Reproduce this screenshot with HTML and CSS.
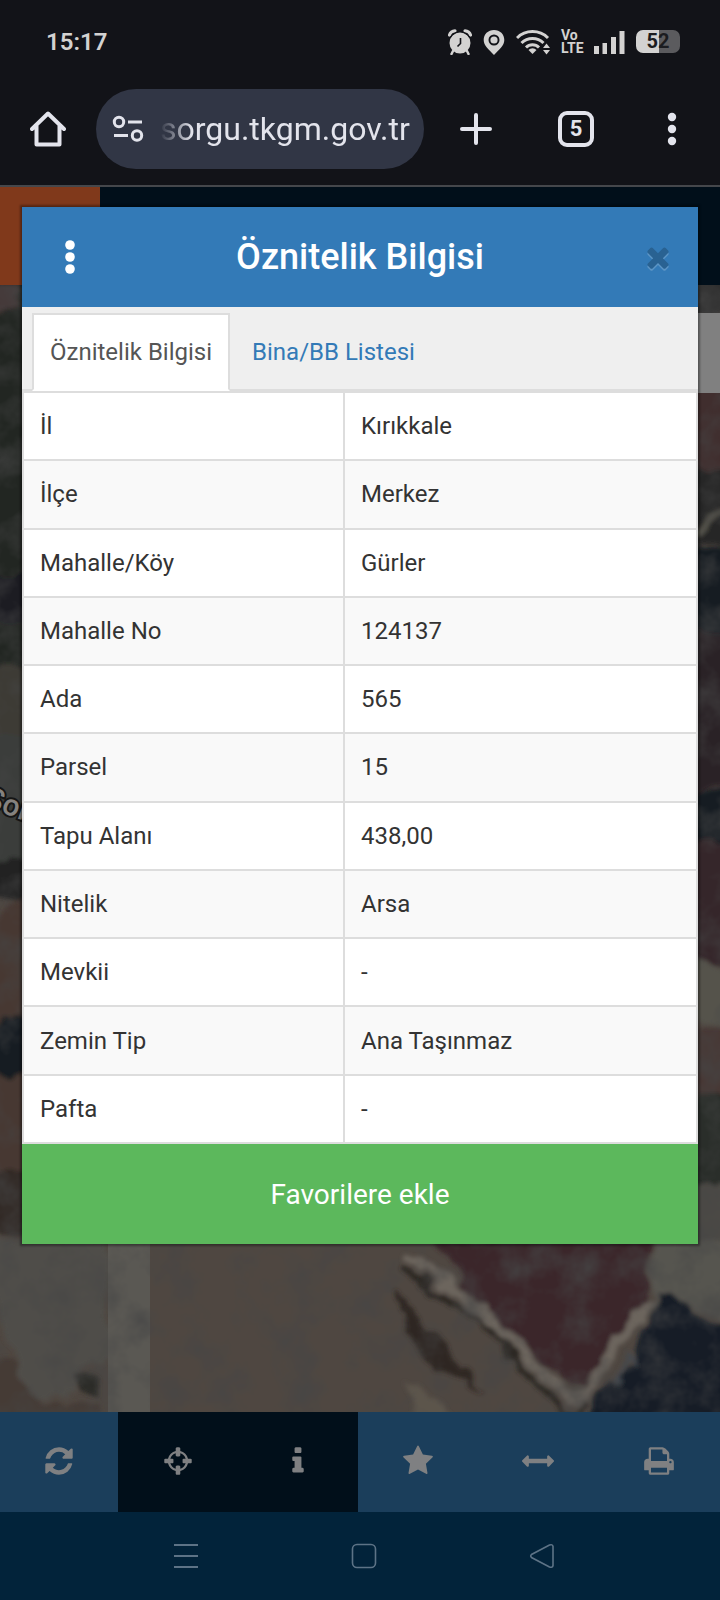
FILE: index.html
```html
<!DOCTYPE html>
<html lang="tr">
<head>
<meta charset="utf-8">
<meta name="viewport" content="width=device-width, initial-scale=1">
<title>Öznitelik Bilgisi</title>
<link rel="stylesheet" href="styles.css">
</head>
<body>
<div class="phone">
  <header class="status-bar">
    <time class="clock">15:17</time>
    <div class="status-icons">
      <svg width="24" height="26" viewBox="0 0 24 26" aria-label="Alarm">
        <circle cx="12" cy="14" r="10.500" fill="currentColor"/>
        <path d="M1.500 6A6 6 0 0 1 7 1.800M22.500 6A6 6 0 0 0 17 1.800" fill="none" stroke="currentColor" stroke-width="3.200" stroke-linecap="round"/>
        <path d="M5 22l-1.500 3M19 22l1.500 3" stroke="currentColor" stroke-width="2.500" stroke-linecap="round"/>
        <path d="M12.500 9v5.500l-3 3" fill="none" stroke="#121318" stroke-width="1.600"/>
        <path d="M2 8.500A13 13 0 0 1 8.500 3.200M22 8.500A13 13 0 0 0 15.500 3.200" fill="none" stroke="#121318" stroke-width="1.200"/>
      </svg>
      <svg width="22" height="26" viewBox="0 0 22 26" aria-label="Konum">
        <path fill-rule="evenodd" d="M11 1C5 1 .7 5.300 .7 11c0 6 5 9 10.300 15 5.300-6 10.300-9 10.300-15C21.300 5.300 17 1 11 1zm0 4.500a5.500 5.500 0 1 1 0 11 5.500 5.500 0 0 1 0-11z" fill="currentColor"/>
        <circle cx="11" cy="11" r="3.600" fill="currentColor"/>
      </svg>
      <svg width="34" height="26" viewBox="0 0 34 26" aria-label="Wi-Fi">
        <g fill="none" stroke="currentColor" stroke-width="3">
          <path d="M1 9a22 22 0 0 1 31 0M5.500 14a15.600 15.600 0 0 1 22 0M10 18.500a9.200 9.200 0 0 1 13 0"/>
        </g>
        <path d="M16.500 25l-4-4a5.600 5.600 0 0 1 8 0z" fill="currentColor"/>
        <path d="M27 19l3.500-4.500L34 19zM27 21l3.500 4.500L34 21z" fill="currentColor"/>
      </svg>
      <span class="volte"><span>Vo</span><span>LTE</span></span>
      <svg width="31" height="26" viewBox="0 0 31 26" aria-label="Sinyal">
        <path d="M0 17h5v8H0zM8.500 14h4.500v11H8.500zM17 8h5v17h-5zM25.500 2h5v23h-5z" fill="currentColor"/>
      </svg>
      <span class="battery">52</span>
    </div>
  </header>

  <nav class="browser-bar">
    <button class="bar-button" aria-label="Ana sayfa">
      <svg width="36" height="38" viewBox="0 0 36 38" fill="none" stroke="currentColor" stroke-width="4" stroke-linejoin="round" stroke-linecap="round"><path d="M2 19L18 3.500 34 19M6.500 16v18.500h23V16"/></svg>
    </button>
    <div class="address">
      <svg width="32" height="28" viewBox="0 0 32 28" fill="none" stroke="currentColor" stroke-width="3"><circle cx="7" cy="7" r="4.700"/><path d="M16 7h14M2 20.500h14"/><circle cx="25" cy="20.500" r="4.700"/></svg>
      <span class="url">sorgu.tkgm.gov.tr</span>
    </div>
    <button class="bar-button plus" aria-label="Yeni sekme">
      <svg width="32" height="32" viewBox="0 0 32 32" stroke="currentColor" stroke-width="4" stroke-linecap="round"><path d="M16 2v28M2 16h28"/></svg>
    </button>
    <button class="bar-button" aria-label="Sekmeler"><span class="tab-count">5</span></button>
    <button class="bar-button" aria-label="Menü">
      <svg width="10" height="34" viewBox="0 0 10 34" fill="currentColor"><circle cx="5" cy="5" r="4.200"/><circle cx="5" cy="17" r="4.200"/><circle cx="5" cy="29" r="4.200"/></svg>
    </button>
  </nav>

  <main class="page">
    <div class="site-bar"><div class="site-logo"></div></div>
    <div class="map">
      <svg class="map-scene" viewBox="0 0 720 1127" preserveAspectRatio="none" aria-hidden="true">
        <defs>
          <filter id="soft" x="-5%" y="-5%" width="110%" height="110%">
            <feTurbulence type="fractalNoise" baseFrequency="0.03" numOctaves="3" seed="4" result="noise"/>
            <feDisplacementMap in="SourceGraphic" in2="noise" scale="26" xChannelSelector="R" yChannelSelector="G"/>
            <feGaussianBlur stdDeviation="2"/>
          </filter>
          <filter id="grain" x="0" y="0" width="100%" height="100%">
            <feTurbulence type="fractalNoise" baseFrequency="0.025" numOctaves="4" seed="8"/>
            <feColorMatrix values="0 0 0 0 0.06  0 0 0 0 0.06  0 0 0 0 0.06  1.600 0 0 0 -0.680"/>
          </filter>
        </defs>
        <rect width="720" height="1127" fill="#4f4741"/>
        <g filter="url(#soft)">
          <path d="M-30-30h70v410h-70z" fill="#232524"/>
          <path d="M-30 0h50v20l-50 18z" fill="#443737"/>
          <path d="M-30 290h60v50h-60z" fill="#1b1e22"/>
          <path d="M-30 380h70v70h-70z" fill="#3d3a35"/>
          <path d="M-30 450h70v135h-70z" fill="#3a3e3b"/>
          <path d="M-30 575h70v35h-70z" fill="#202322"/>
          <path d="M-30 655l70-60v140h-70z" fill="#463731"/>
          <path d="M-30 735h70v55h-70z" fill="#171c24"/>
          <path d="M-30 790h70v100h-70z" fill="#463831"/>
          <path d="M-30 890h70v60h-70z" fill="#302a27"/>
          <path d="M680-30h70v58h-70z" fill="#2a2c2a"/>
          <path d="M680 90h70v93h-70z" fill="#402d2d"/>
          <path d="M680 183h70v77h-70z" fill="#252725"/>
          <path d="M695 248q12-20 40-15" fill="none" stroke="#55534c" stroke-width="8"/>
          <path d="M680 262h70v85h-70z" fill="#181d23"/>
          <path d="M680 347h70v160h-70z" fill="#2b2328"/>
          <path d="M680 502l70 15v45h-70z" fill="#171b22"/>
          <path d="M680 560h70v120h-70z" fill="#35272a"/>
          <path d="M680 670l70 25v55l-70-18z" fill="#55534c"/>
          <path d="M680 745h70v65h-70z" fill="#463735"/>
          <path d="M680 810h70v90h-70z" fill="#2b2d2a"/>
          <path d="M680 900h70v60h-70z" fill="#4b4944"/>
          <g transform="translate(0 935) scale(.459)">
            <path d="M-60 40L240 40v280h-70l-30 70-60 10-60-130z" fill="#504d48"/>
            <path d="M-60 290l100 30 50 90 130-10v250H-60z" fill="#453b36"/>
            <path d="M150 335l70 5-10 45-50-15z" fill="#2c2926"/>
            <path d="M380 500l68-10 15 160h-95z" fill="#272626"/>
            <path d="M850 140l180 210 20 20-90-40-70-90z" fill="#2d2524"/>
            <path d="M940 40h500l-40 150-130 190-230-190z" fill="#3a282c"/>
            <path d="M880 340l110 80 60 230h-90z" fill="#5c554c"/>
            <path d="M1440 40h200v220l-140-70-90 10z" fill="#57544f"/>
            <path d="M885 85l140 90 180 180 50 50 60-90 90-130" fill="none" stroke="#6c655d" stroke-width="24"/>
            <path d="M870 110l180 110 190 215 30-30" fill="none" stroke="#2b2724" stroke-width="12"/>
            <path d="M1425 172l60 10 65 50 100-20v450h-350l-35-180 35-100 80-70z" fill="#171e27"/>
            <path d="M1350 350l20-55 20 20" fill="none" stroke="#454a50" stroke-width="8"/>
          </g>
        </g>
        <path d="M108 950h42v177h-42z" fill="#5a5853"/>
        <rect width="720" height="1127" filter="url(#grain)"/>
        <text class="map-label" x="-18" y="527" transform="rotate(20 0 527)">Sor</text>
        <path d="M640 28h80v80h-80z" fill="#808080"/>
      </svg>
    </div>
    <div class="tools">
      <button class="tool" aria-label="Yenile"><svg class="fa" viewBox="0 0 1792 1792"><path d="M1639 1056q0 5-1 7-64 268-268 434.500t-478 166.500q-146 0-282.500-55t-243.500-157l-129 129q-19 19-45 19t-45-19-19-45v-448q0-26 19-45t45-19h448q26 0 45 19t19 45-19 45l-137 137q71 66 161 102t187 36q134 0 250-65t186-179q11-17 53-117 8-23 30-23h192q13 0 22.500 9.500t9.500 22.500zm25-800v448q0 26-19 45t-45 19h-448q-26 0-45-19t-19-45 19-45l138-138q-148-137-349-137-134 0-250 65t-186 179q-11 17-53 117-8 23-30 23h-199q-13 0-22.500-9.500t-9.500-22.500v-7q65-268 270-434.500t480-166.500q146 0 284 55.500t245 156.500l130-129q19-19 45-19t45 19 19 45z"/></svg></button>
      <button class="tool active" aria-label="Konumum"><svg class="fa" viewBox="0 0 1792 1792"><path d="M1325 1024h-109q-26 0-45-19t-19-45v-128q0-26 19-45t45-19h109q-32-108-112.500-188.500t-188.500-112.500v109q0 26-19 45t-45 19h-128q-26 0-45-19t-19-45v-109q-108 32-188.500 112.500t-112.500 188.500h109q26 0 45 19t19 45v128q0 26-19 45t-45 19h-109q32 108 112.500 188.500t188.500 112.500v-109q0-26 19-45t45-19h128q26 0 45 19t19 45v109q108-32 188.500-112.500t112.500-188.500zm339-192v128q0 26-19 45t-45 19h-143q-37 161-154.500 278.500t-278.500 154.500v143q0 26-19 45t-45 19h-128q-26 0-45-19t-19-45v-143q-161-37-278.500-154.500t-154.500-278.500h-143q-26 0-45-19t-19-45v-128q0-26 19-45t45-19h143q37-161 154.500-278.500t278.500-154.500v-143q0-26 19-45t45-19h128q26 0 45 19t19 45v143q161 37 278.500 154.500t154.500 278.500h143q26 0 45 19t19 45z"/></svg></button>
      <button class="tool active" aria-label="Bilgi"><svg class="fa" viewBox="0 0 1792 1792"><path d="M1216 1344v128q0 26-19 45t-45 19h-512q-26 0-45-19t-19-45v-128q0-26 19-45t45-19h64v-384h-64q-26 0-45-19t-19-45v-128q0-26 19-45t45-19h384q26 0 45 19t19 45v576h64q26 0 45 19t19 45zm-128-1152v192q0 26-19 45t-45 19h-256q-26 0-45-19t-19-45v-192q0-26 19-45t45-19h256q26 0 45 19t19 45z"/></svg></button>
      <button class="tool" aria-label="Favoriler"><svg class="fa" viewBox="0 0 1792 1792"><path d="M1728 647q0 22-26 48l-363 354 86 500q1 7 1 20 0 21-10.500 35.500t-30.500 14.500q-19 0-40-12l-449-236-449 236q-22 12-40 12-21 0-31.500-14.500t-10.500-35.500q0-6 2-20l86-500-364-354q-25-27-25-48 0-37 56-46l502-73 225-455q19-41 49-41t49 41l225 455 502 73q56 9 56 46z"/></svg></button>
      <button class="tool" aria-label="Ölçüm"><svg class="fa" viewBox="0 0 1792 1792"><path d="M1792 896q0 26-19 45l-256 256q-19 19-45 19t-45-19-19-45v-128h-1024v128q0 26-19 45t-45 19-45-19l-256-256q-19-19-19-45t19-45l256-256q19-19 45-19t45 19 19 45v128h1024v-128q0-26 19-45t45-19 45 19l256 256q19 19 19 45z"/></svg></button>
      <button class="tool" aria-label="Yazdır"><svg class="fa" viewBox="0 0 1792 1792"><path d="M448 1536h896v-256h-896v256zm0-640h896v-384h-160q-40 0-68-28t-28-68v-160h-640v640zm1152 64q0-26-19-45t-45-19-45 19-19 45 19 45 45 19 45-19 19-45zm128 0v416q0 13-9.500 22.500t-22.500 9.500h-224v160q0 40-28 68t-68 28h-960q-40 0-68-28t-28-68v-160h-224q-13 0-22.500-9.500t-9.500-22.500v-416q0-79 56.500-135.500t135.500-56.500h64v-544q0-40 28-68t68-28h672q40 0 88 20t76 48l152 152q28 28 48 76t20 88v256h64q79 0 135.500 56.500t56.500 135.500z"/></svg></button>
    </div>

    <section class="modal" role="dialog" aria-labelledby="modal-title">
      <header class="modal-header">
        <button class="modal-button" aria-label="Seçenekler"><svg width="10" height="36" viewBox="0 0 10 36" fill="#fff"><circle cx="5" cy="6" r="4.800"/><circle cx="5" cy="18" r="4.800"/><circle cx="5" cy="30" r="4.800"/></svg></button>
        <h1 class="modal-title" id="modal-title">Öznitelik Bilgisi</h1>
        <button class="modal-button close" aria-label="Kapat"><svg class="fa" viewBox="0 0 1792 1792"><path d="M1490 1322q0 40-28 68l-136 136q-28 28-68 28t-68-28l-294-294-294 294q-28 28-68 28t-68-28l-136-136q-28-28-28-68t28-68l294-294-294-294q-28-28-28-68t28-68l136-136q28-28 68-28t68 28l294 294 294-294q28-28 68-28t68 28l136 136q28 28 28 68t-28 68l-294 294 294 294q28 28 28 68z"/></svg></button>
      </header>
      <nav class="tabs">
        <a class="tab selected" href="#oznitelik">Öznitelik Bilgisi</a>
        <a class="tab" href="#bina">Bina/BB Listesi</a>
      </nav>
      <table class="attributes" id="oznitelik">
        <tbody>
          <tr><th scope="row">İl</th><td>Kırıkkale</td></tr>
          <tr><th scope="row">İlçe</th><td>Merkez</td></tr>
          <tr><th scope="row">Mahalle/Köy</th><td>Gürler</td></tr>
          <tr><th scope="row">Mahalle No</th><td>124137</td></tr>
          <tr><th scope="row">Ada</th><td>565</td></tr>
          <tr><th scope="row">Parsel</th><td>15</td></tr>
          <tr><th scope="row">Tapu Alanı</th><td>438,00</td></tr>
          <tr><th scope="row">Nitelik</th><td>Arsa</td></tr>
          <tr><th scope="row">Mevkii</th><td>-</td></tr>
          <tr><th scope="row">Zemin Tip</th><td>Ana Taşınmaz</td></tr>
          <tr><th scope="row">Pafta</th><td>-</td></tr>
        </tbody>
      </table>
      <button class="favorite">Favorilere ekle</button>
    </section>
  </main>

  <nav class="system-nav">
    <button class="system-button" aria-label="Son uygulamalar"><svg width="26" height="26" viewBox="0 0 26 26" stroke="currentColor" stroke-width="2"><path d="M1 2h24M1 13h24M1 24h24"/></svg></button>
    <button class="system-button" aria-label="Ana ekran"><svg width="26" height="26" viewBox="0 0 26 26" fill="none" stroke="currentColor" stroke-width="1.600"><rect x="1.500" y="1.500" width="23" height="23" rx="4.500"/></svg></button>
    <button class="system-button" aria-label="Geri"><svg width="26" height="26" viewBox="0 0 26 26" fill="none" stroke="currentColor" stroke-width="1.600"><path d="M2.500 11.500q-1.500 1.500 0 3l18 9.500q3 1 3.500-1.500v-19q-.5-2.500-3.500-1.500z"/></svg></button>
  </nav>
</div>
</body>
</html>
```

FILE: styles.css
```css
* {
  box-sizing: border-box;
}

body {
  margin: 0;
  background: #121318;
  font-family: Roboto, "Liberation Sans", sans-serif;
}

button {
  display: flex;
  align-items: center;
  justify-content: center;
  margin: 0;
  padding: 0;
  border: 0;
  background: none;
  color: inherit;
  font: inherit;
}

svg {
  display: block;
  flex: none;
}

.phone {
  display: flex;
  flex-direction: column;
  min-height: 100vh;
}

.status-bar {
  display: flex;
  align-items: center;
  justify-content: space-between;
  height: 83px;
  padding: 0 40px 0 46px;
  color: #d3d2d1;
}

.clock {
  font-size: 24px;
  font-weight: 600;
}

.status-icons {
  display: flex;
  align-items: center;
  gap: 11px;
}

.volte {
  display: flex;
  flex-direction: column;
  width: 22px;
  font-size: 14px;
  font-weight: 700;
  line-height: 13px;
}

.battery {
  width: 44px;
  height: 23px;
  border-radius: 7px;
  background: linear-gradient(to right, #d3d2d1 52%, #5b5b5e 52%);
  color: #1b1c20;
  font-size: 20px;
  font-weight: 700;
  line-height: 23px;
  text-align: center;
}

.browser-bar {
  display: flex;
  align-items: center;
  padding: 6px 0 16px;
  border-bottom: 2px solid #45474b;
  color: #e3e4ec;
}

.bar-button {
  width: 96px;
  height: 80px;
}

.plus {
  width: 104px;
}

.address {
  display: flex;
  flex: 1;
  align-items: center;
  gap: 16px;
  height: 80px;
  padding: 0 12px 0 16px;
  border-radius: 40px;
  background: #313645;
}

.url {
  font-size: 32px;
  line-height: 40px;
  white-space: nowrap;
  mask-image: linear-gradient(to right, transparent, #000 32px);
}

.tab-count {
  width: 36px;
  height: 36px;
  border: 4px solid currentColor;
  border-radius: 9px;
  font-size: 22px;
  font-weight: 700;
  line-height: 28px;
}

.page {
  position: relative;
  display: flex;
  flex: 1;
  flex-direction: column;
}

.site-bar {
  height: 98px;
  background: #010f1a;
}

.site-logo {
  width: 100px;
  height: 100%;
  background: #80391b;
}

.map {
  display: flex;
  flex: 1;
  min-height: 1080px;
}

.map-scene {
  flex: 1;
  width: 100%;
  height: auto;
}

.map-label {
  fill: #85827f;
  stroke: #151515;
  stroke-width: 4px;
  paint-order: stroke;
  font-size: 30px;
  font-weight: 500;
}

.tools {
  display: grid;
  grid-template-columns: 118fr repeat(4, 120fr) 122fr;
  height: 100px;
  background: #1b3e5b;
  color: #7f8082;
}

.tool {
  padding-bottom: 2px;
}

.tool.active {
  background: #010f1a;
}

.fa {
  width: 32px;
  height: 32px;
  fill: currentColor;
}

.modal {
  position: absolute;
  top: 20px;
  right: 22px;
  left: 22px;
  background: #fff;
  box-shadow: 0 0 2px 2px rgba(0, 0, 0, 0.35);
}

.modal-header {
  display: flex;
  align-items: center;
  height: 100px;
  background: #337ab7;
  color: #fff;
}

.modal-button {
  width: 96px;
  height: 80px;
}

.close {
  padding-left: 16px;
  color: #296292;
  filter: drop-shadow(0 2px 0 #5c95c5);
}

.modal-title {
  flex: 1;
  margin: 0;
  font-size: 36px;
  font-weight: 500;
  line-height: 44px;
  text-align: center;
}

.tabs {
  display: flex;
  height: 84px;
  padding: 6px 10px 0;
  border-bottom: 2px solid #ddd;
  background: #efefef;
}

.tab {
  margin-bottom: -2px;
  padding: 0 20px;
  border: 2px solid transparent;
  color: #337ab7;
  font-size: 24px;
  line-height: 74px;
  text-decoration: none;
}

.tab.selected {
  padding: 0 16px;
  border-color: #ddd;
  border-bottom-color: #fff;
  background: #fff;
  color: #555;
}

.attributes {
  width: 100%;
  height: 753px;
  border-collapse: collapse;
  color: #333;
  font-size: 24px;
  line-height: 34px;
}

.attributes th,
.attributes td {
  padding: 0 16px;
  border: 2px solid #ddd;
  font-weight: 400;
  text-align: left;
}

.attributes th {
  width: 321px;
}

.attributes tr:nth-child(even) {
  background: #f9f9f9;
}

.favorite {
  width: 100%;
  height: 100px;
  background: #5cb85c;
  color: #fff;
  font-size: 28px;
}

.system-nav {
  display: grid;
  grid-template-columns: repeat(3, 1fr);
  height: 88px;
  padding: 0 89px 0 97px;
  background: #02233a;
  color: #5d7386;
}
```
